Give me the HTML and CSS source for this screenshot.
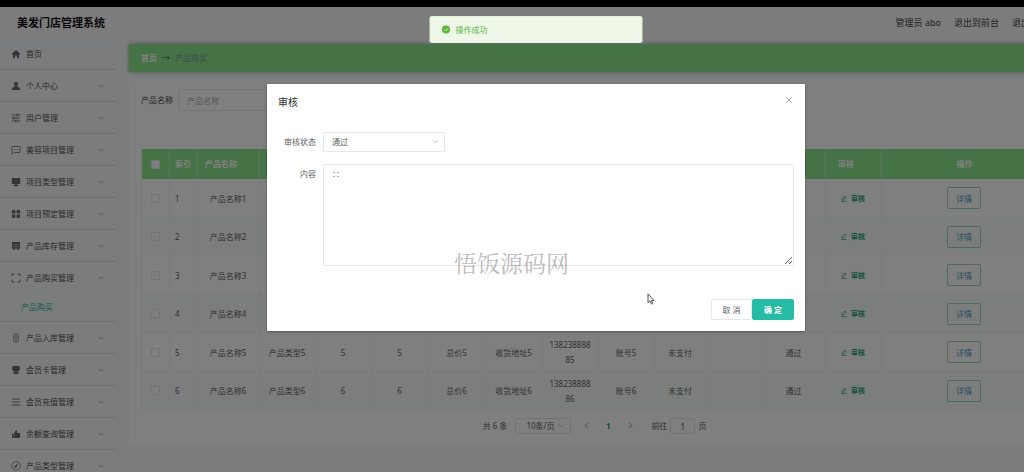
FILE: index.html
```html
<!DOCTYPE html>
<html lang="zh">
<head>
<meta charset="utf-8">
<title>美发门店管理系统</title>
<link rel="stylesheet" href="styles.css">
</head>
<body>
<div class="app">
  <header class="topbar">
    <h1 class="brand">美发门店管理系统</h1>
    <nav class="top-links">
      <span>管理员 abo</span>
      <a href="#">退出到前台</a>
      <a href="#">退出登录</a>
    </nav>
  </header>
  <div class="body">
    <nav class="sidebar" id="menu"></nav>
    <main class="main">
      <div class="breadcrumb"><b>首页</b><span class="arrow">→</span><span class="current">产品购买</span></div>
      <section class="panel">
        <form class="search">
          <label for="q">产品名称</label>
          <input id="q" type="text" placeholder="产品名称">
        </form>
        <table class="grid">
          <colgroup>
            <col class="c28"><col class="c28"><col class="c62"><col class="c56"><col class="c56"><col class="c57"><col class="c57"><col class="c57"><col class="c56"><col class="c56"><col class="c52"><col class="c56"><col class="c63"><col class="c56"><col>
          </colgroup>
          <thead>
            <tr>
              <th class="mid"><input type="checkbox" aria-label="全选"></th>
              <th class="idx">索引</th><th>产品名称</th><th>产品类型</th><th>单价</th><th>数量</th><th>总价</th><th>收货地址</th><th>手机</th><th>账号</th><th>是否支付</th><th>回复</th><th>状态</th><th class="wide">审核</th><th class="mid">操作</th>
            </tr>
          </thead>
          <tbody id="rows"></tbody>
        </table>
        <div class="pager">
          <span>共 6 条</span>
          <span class="select-wrap size"><select aria-label="每页条数"><option>10条/页</option></select><svg viewBox="0 0 8 8"><path d="M1 2.500l3 3 3-3"/></svg></span>
          <button type="button" class="page" aria-label="上一页"><svg viewBox="0 0 8 8"><path d="M5.500 1l-3 3 3 3"/></svg></button>
          <button type="button" class="page on">1</button>
          <button type="button" class="page" aria-label="下一页"><svg viewBox="0 0 8 8"><path d="M2.500 1l3 3-3 3"/></svg></button>
          <label class="jump">前往 <input type="text" value="1"> 页</label>
        </div>
      </section>
    </main>
  </div>
  <div class="mask">
    <div class="dialog" role="dialog" aria-labelledby="dlg">
      <div class="dialog-head">
        <h2 id="dlg">审核</h2>
        <button type="button" class="close" aria-label="关闭"><svg viewBox="0 0 8 8"><path d="M1 1l6 6M7 1l-6 6"/></svg></button>
      </div>
      <form class="dialog-form">
        <label for="state">审核状态</label>
        <span class="select-wrap state"><select id="state"><option>通过</option></select><svg viewBox="0 0 8 8"><path d="M1 2.500l3 3 3-3"/></svg></span>
        <label for="content">内容</label>
        <textarea id="content">：：</textarea>
      </form>
      <div class="dialog-foot">
        <button type="button" class="btn">取 消</button>
        <button type="button" class="btn primary">确 定</button>
      </div>
    </div>
  </div>
  <div class="toast" role="alert">
    <svg viewBox="0 0 10 10"><circle cx="5" cy="5" r="4.500" fill="#5cb53a"/><path d="M2.800 5.100l1.600 1.600 2.900-3" fill="none" stroke="#f0f9eb"/></svg>
    <span>操作成功</span>
  </div>
</div>
<div class="watermark">悟饭源码网</div>
<svg class="cursor" viewBox="0 0 8 12"><path d="M1 .800v9l2-1.900 1.400 3.200 1.300-.600-1.400-3h2.600z" fill="#fff" stroke="#444" stroke-width=".9"/></svg>
<script src="app.js"></script>
</body>
</html>
```
FILE: styles.css
```css
* { box-sizing: border-box; }
body {
  margin: 0;
  padding-top: 7px;
  height: 100vh;
  overflow: hidden;
  background: #000;
  color: #606266;
  font: 8px/12px "Noto Sans", "Noto Sans CJK SC", sans-serif;
}
button, input, select, textarea { font: inherit; color: inherit; margin: 0; }
h1, h2 { margin: 0; }
svg { fill: none; stroke: currentColor; }

.app {
  position: relative;
  width: calc(100% + 48px);
  height: 100%;
  overflow: hidden;
  background: #f5f9f8;
}
.topbar {
  display: flex;
  align-items: center;
  justify-content: space-between;
  height: 31px;
  padding: 0 24px 0 17px;
  background: #f9f8fb;
}
.brand { color: #111; font-size: 11px; line-height: 16px; }
.top-links { display: flex; gap: 13px; font-size: 9px; color: #444; }
.top-links a { color: inherit; text-decoration: none; }

.body { display: flex; align-items: flex-start; background: linear-gradient(#f9f8fb, #f5f9f8 60px); }
.sidebar { width: 116px; flex: none; color: #505256; background: #f7f9fa; }
.item {
  display: flex;
  align-items: center;
  width: 100%;
  height: 32px;
  padding: 0 12px 0 11px;
  border: 0;
  border-bottom: 1px solid #d9dbdf;
  background: none;
  text-align: left;
}
.item.open { border-bottom: 0; height: 31px; }
.item .icon { width: 10px; height: 10px; margin-right: 5px; color: #686b72; }
.item span { flex: 1; }
.item .caret { width: 6px; height: 6px; color: #999; }
.item.open .caret { transform: rotate(180deg); }
.sub {
  display: block;
  height: 29px;
  padding: 8px 0 0 21px;
  border-bottom: 1px solid #d9dbdf;
  color: #26b9a0;
  text-decoration: none;
}

.main { flex: 1; padding: 6px 12px 0 13px; }
.breadcrumb {
  display: flex;
  align-items: center;
  gap: 5px;
  height: 28px;
  padding: 0 12px;
  background: #8ce68c;
  box-shadow: 0 0 4px #999;
  color: #fff;
}
.breadcrumb .arrow { color: #555; }
.breadcrumb .current { color: #7796a8; }
.panel { margin-top: 7px; padding: 10px 12px 11px; background: #fff; }
.search { display: flex; align-items: center; gap: 5px; margin-bottom: 38px; color: #444; }
.search input { width: 110px; height: 22px; padding: 0 8px; border: 1px solid #e9ebef; border-radius: 2px; background: none; }
::placeholder { color: #aaa; opacity: 1; }

.grid { width: 100%; table-layout: fixed; border-collapse: separate; border-spacing: 0; border-left: 1px solid #eef2f3; }
.c28 { width: 28px; }
.c52 { width: 52px; }
.c56 { width: 56px; }
.c57 { width: 57px; }
.c62 { width: 62px; }
.c63 { width: 63px; }
.grid th { height: 30px; padding: 0 0 0 7px; background: #8ce68c; border-right: 1px solid #b4edb4; color: #fff; text-align: left; white-space: nowrap; overflow: hidden; }
.grid th.idx { padding-left: 5px; }
.grid th.wide { padding-left: 12px; }
.grid th.mid { padding: 0; text-align: center; }
.grid td { height: 39px; padding: 0 7px 0 6px; border-right: 1px solid #f2f5f8; border-bottom: 1px solid #f2f5f8; text-align: center; line-height: 15px; overflow-wrap: anywhere; }
.grid td:nth-child(2) { padding-left: 5px; text-align: left; }
.grid td:nth-child(1) { padding: 0; }
.grid tr:nth-child(even) td { height: 38px; background: #f9fcfb; }
.grid input { appearance: none; display: block; width: 9px; height: 9px; margin: 0 auto; border: 1px solid #e6e8ed; border-radius: 1px; background: #fff; }
.audit { display: inline-flex; align-items: center; gap: 4px; padding: 0; border: 0; background: none; color: #22a078; font-size: 7px; font-weight: bold; }
.audit svg { width: 6px; height: 7px; }
.detail { width: 34px; height: 22px; padding: 0; border: 1px solid #9ed4ac; border-radius: 2px; background: none; color: #4b9dc0; }

.pager { display: flex; align-items: center; justify-content: center; gap: 8px; margin-top: 8px; height: 16px; }
.select-wrap { position: relative; display: block; }
.select-wrap select { appearance: none; width: 100%; height: 100%; padding: 0 8px; border: 1px solid #e4e7ed; border-radius: 2px; background: none; }
.select-wrap svg { position: absolute; right: 6px; top: 50%; width: 7px; height: 7px; margin-top: -4px; color: #b8bcc4; }
.size { width: 56px; height: 16px; }
.size select { padding-left: 10px; }
.page { width: 14px; height: 14px; padding: 0; border: 0; background: none; }
.page svg { width: 7px; height: 7px; color: #888; }
.page.on { color: #169b70; font-weight: bold; }
.jump { display: flex; align-items: center; gap: 3px; margin-left: 6px; }
.jump input { width: 25px; height: 16px; padding: 0; border: 1px solid #e4e7ed; border-radius: 2px; background: none; text-align: center; }

.mask { position: absolute; inset: 0; display: flex; align-items: flex-start; justify-content: center; padding-top: 77px; background: rgba(0, 0, 0, .5); }
.dialog { width: 538px; padding: 12px 11px 11px; background: #fff; border-radius: 1px; box-shadow: 0 1px 3px rgba(0, 0, 0, .3); }
.dialog-head { display: flex; align-items: flex-start; justify-content: space-between; margin-bottom: 23px; }
.dialog-head h2 { color: #303133; font-size: 10px; line-height: 13px; font-weight: normal; }
.close { width: 10px; height: 8px; padding: 0; border: 0; background: none; color: #909399; line-height: 8px; }
.close svg { width: 8px; height: 8px; stroke-width: .8; }
.dialog-form { display: grid; grid-template-columns: 38px 1fr; column-gap: 7px; row-gap: 12px; }
.dialog-form label { line-height: 20px; text-align: right; white-space: nowrap; }
.state { width: 122px; height: 20px; }
textarea { display: block; width: 100%; height: 102px; padding: 3px 8px; border: 1px solid #e4e7ed; border-radius: 2px; background: none; resize: vertical; }
.dialog-foot { display: flex; justify-content: flex-end; margin-top: 33px; }
.btn { width: 41px; height: 21px; padding: 0; border: 1px solid #e4e7ed; border-radius: 2px; background: #fff; }
.btn.primary { width: 42px; background: #26bba4; border-color: #26bba4; color: #fff; font-weight: bold; }

.toast { position: absolute; top: 9px; left: 50%; transform: translateX(-50%); display: flex; align-items: center; gap: 5px; width: 213px; height: 27px; padding: 0 11px; border: 1px solid #e1f3d8; border-radius: 2px; background: #eef7e8; color: #5cb53a; }
.toast svg { width: 9px; height: 9px; stroke: none; }

.watermark { position: absolute; left: 454px; top: 248px; color: rgba(80, 80, 80, .4); font: 23px/34px "Liberation Serif", "Noto Serif CJK SC", "Noto Sans CJK SC", serif; white-space: nowrap; }
.cursor { position: absolute; left: 647px; top: 293px; width: 8px; height: 12px; }
```
FILE: app.js
```js
const icons = {
  home: '<path fill="currentColor" stroke="none" d="M5 1L.500 5l.700.700L2 5v4h2V6.500h2V9h2V5l.800.700.700-.700z"/>',
  user: '<path fill="currentColor" stroke="none" d="M5 .800a2.200 2.200 0 0 1 1.200 4v.700L9 7v2H1V7l2.800-1.500v-.700A2.200 2.200 0 0 1 5 .800z"/>',
  sliders: '<path stroke-width=".8" d="M.500 2h5M8 2h1.500M.500 5H2M4.500 5h5M.500 8h4M7 8h2.500"/><path stroke-width=".7" d="M5.500 1h2v2h-2zM2 4h2v2H2zM4.500 7h2v2h-2z"/>',
  chat: '<path stroke-width=".8" d="M1 1.500h8v6H3.500L1 9zM3 4.500h.8M4.600 4.500h.8M6.200 4.500h.8"/>',
  screen: '<path fill="currentColor" stroke="none" d="M.800 1h8.400v6H6v1h1.500v1h-5V8H4V7H.800z"/>',
  tiles: '<path fill="currentColor" stroke="none" d="M1 1h3.400v3.400H1zM5.600 1H9v3.400H5.600zM1 5.600h3.400V9H1zM5.600 5.600H9V9H5.600z"/>',
  box: '<path fill="currentColor" stroke="none" d="M1 1h8v6.500H8V9H6.500V7.500h-3V9H2V7.500H1z"/><path stroke="#ddd" stroke-width=".5" d="M2 3.500h6M2 5.500h6"/>',
  frame: '<path stroke-width=".9" d="M1 3.500V1h2.500M6.500 1H9v2.500M9 6.500V9H6.500M3.500 9H1V6.500"/>',
  phone: '<rect stroke-width=".8" x="2.800" y=".800" width="4.400" height="8.400" rx="1.500"/><path stroke-width=".5" d="M4.500 2.500v5M5.500 2.500v5"/>',
  cup: '<path fill="currentColor" stroke="none" d="M1 2l1-1h6l1 1v2.500L7.500 6.500V9h-5V6.500L1 4.500z"/><path stroke="#ddd" stroke-width=".5" d="M2 7h6"/>',
  lines: '<path stroke-width=".9" d="M1 2h8M1 5h8M1 8h8"/>',
  thumb: '<path fill="currentColor" stroke="none" d="M1 4.500h1.700V9H1zM3.200 4L5 1l1 .500V4h3v4.500L8.500 9H3.200z"/>',
  compass: '<circle stroke-width=".7" cx="5" cy="5" r="4.300"/><path fill="currentColor" stroke="none" d="M7 2.500L5.700 5.800 3 7.500l1.300-3.300z"/>'
};
const menu = [
  ['home', '首页'], ['user', '个人中心'], ['sliders', '用户管理'], ['chat', '美容项目管理'],
  ['screen', '项目类型管理'], ['tiles', '项目预定管理'], ['box', '产品库存管理'],
  ['frame', '产品购买管理', '产品购买'], ['phone', '产品入库管理'], ['cup', '会员卡管理'],
  ['lines', '会员充值管理'], ['thumb', '余额查询管理'], ['compass', '产品类型管理']
];
document.getElementById('menu').innerHTML = menu.map(([icon, text, sub]) =>
  `<button type="button" class="item${sub ? ' open' : ''}"><svg class="icon" viewBox="0 0 10 10">${icons[icon]}</svg><span>${text}</span>` +
  (icon === 'home' ? '' : '<svg class="caret" viewBox="0 0 8 8"><path d="M1 2.500l3 3 3-3"/></svg>') +
  '</button>' + (sub ? `<a class="sub" href="#">${sub}</a>` : '')).join('');

const audit = '<button type="button" class="audit"><svg viewBox="0 0 7 8"><path stroke-width=".8" d="M1 6V4.500L4.500 1 6 2.300 2.500 6zM.500 7.500h6"/></svg>审核</button>';
document.getElementById('rows').innerHTML = [1, 2, 3, 4, 5, 6].map(n => {
  const cells = [`<input type="checkbox" aria-label="选择${n}">`, n, '产品名称' + n, '产品类型' + n, n, n,
    '总价' + n, '收货地址' + n, '1382388888' + n, '账号' + n, '未支付', '', '通过', audit,
    '<button type="button" class="detail">详情</button>'];
  return '<tr>' + cells.map(c => `<td>${c}</td>`).join('') + '</tr>';
}).join('');
```
